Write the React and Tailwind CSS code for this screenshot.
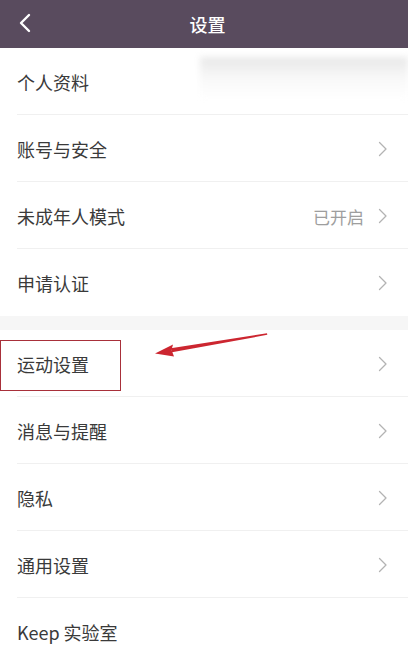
import React from "react";

const Chevron = () => (
  <svg width="10" height="16" viewBox="0 0 10 16" fill="none" className="shrink-0">
    <path d="M1.5 1.5 L8 8 L1.5 14.5" stroke="#b3b3b3" strokeWidth="1.3" strokeLinecap="round" strokeLinejoin="round" />
  </svg>
);

const Row = ({ label, value, chevron = true, last = false, boxed = false }) => (
  <div className="relative flex h-[67px] items-center pl-[17px] pr-[20px]">
    <span className="flex-1 pt-[2px] text-[18px] text-[#3a3a3a]">{label}</span>
    {value && <span className="mr-[14px] pt-[2px] text-[17px] text-[#9e9e9e]">{value}</span>}
    {chevron && <Chevron />}
    {!last && <div className="absolute bottom-0 left-[17px] right-0 h-px bg-[#f0f0f0]" />}
    {boxed && (
      <div className="absolute left-0 top-[10px] h-[51px] w-[121px] border-[1.5px] border-[#a8303a]" />
    )}
  </div>
);

export default function App() {
  return (
    <div
      className="relative h-[649px] w-[408px] overflow-hidden bg-white"
      style={{ fontFamily: '"Noto Sans CJK SC", "Noto Sans", sans-serif' }}
    >
      <div className="relative flex h-[48px] items-center justify-center bg-[#594b5e] pl-[7px]">
        <svg width="14" height="20" viewBox="0 0 14 20" fill="none" className="absolute left-[18px] top-[13px]">
          <path d="M11 2 L3 10 L11 18" stroke="#ffffff" strokeWidth="2.4" strokeLinecap="round" strokeLinejoin="round" />
        </svg>
        <span className="text-[18px] font-medium text-white">设置</span>
      </div>
      <div className="relative">
        <Row label="个人资料" chevron={false} />
        <div className="absolute left-[200px] top-[9px] h-[42px] w-[208px] bg-gradient-to-b from-[#e8e8e8] via-[#f8f8f8] to-white blur-[3px]" />
      </div>
      <Row label="账号与安全" />
      <Row label="未成年人模式" value="已开启" />
      <Row label="申请认证" last />
      <div className="h-[14px] bg-[#f6f6f6]" />
      <Row label="运动设置" boxed />
      <Row label="消息与提醒" />
      <Row label="隐私" />
      <Row label="通用设置" />
      <Row label="Keep 实验室" chevron={false} last />
      <svg className="absolute left-0 top-0" width="408" height="649" viewBox="0 0 408 649" fill="none">
        <path d="M267 333.2 L267.3 334.8 L172 352.3 L170.8 348.3 Z" fill="#cc2630" />
        <path d="M155 353.5 L173 344.5 L171.5 350 L174 356.5 Z" fill="#cc2630" />
      </svg>
    </div>
  );
}
